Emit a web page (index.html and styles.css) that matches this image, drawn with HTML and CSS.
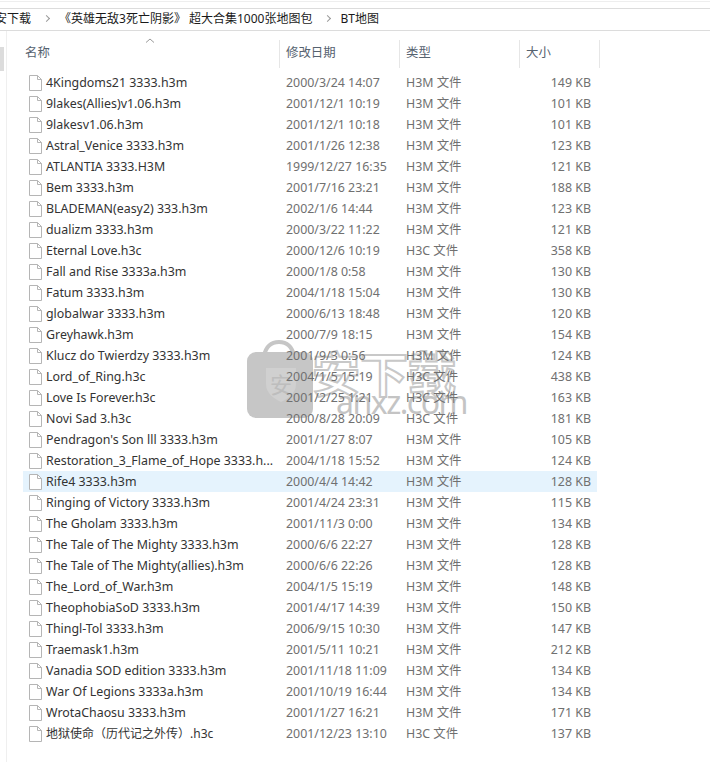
FILE: index.html
```html
<!DOCTYPE html>
<html lang="en">
<head>
  <meta charset="UTF-8">
  <title>BT地图</title>
  <link rel="stylesheet" href="styles.css">
</head>
<body>
  <div class="topline"></div>
  <div class="breadcrumb">
    <span class="first">安下载</span><i class="sep"></i>
    <span>《英雄无敌3死亡阴影》 超大合集1000张地图包</span><i class="sep"></i>
    <span>BT地图</span>
  </div>
  <div class="pane">
    <div class="sidebar"><div class="thumb"></div></div>
    <div class="main">
      <div class="head">
        <div class="col name">名称<svg class="caret" width="10" height="5" viewBox="0 0 10 5"><path d="M1 4.5 5 1l4 3.5" fill="none" stroke="#9a9a9a"/></svg></div>
        <div class="col date">修改日期</div>
        <div class="col type">类型</div>
        <div class="col size">大小</div>
      </div>
      <div id="rows"></div>
    </div>
  </div>
  <div class="mark">
    <svg width="66" height="79" viewBox="0 0 66 79">
      <path d="M17 16C19 6 25 2 32 2s13 4 15 14" fill="none" stroke="#c6c6c6" stroke-width="4"/>
      <rect x="0" y="12" width="66" height="66" rx="9" fill="#c6c6c6"/>
      <path d="M19 28h30v16c0 9-7 14-15 18-8-4-15-9-15-18z" fill="#d0d0d0"/>
      <text x="34" y="53" text-anchor="middle" class="mark-glyph">安</text>
    </svg>
    <div class="mark-text">
      <div class="mark-cn">安下载</div>
      <div class="mark-en">anxz.com</div>
    </div>
  </div>
  <script src="rows.js"></script>
</body>
</html>
```

FILE: styles.css
```css
body {
  margin: 0;
  width: 710px;
  height: 762px;
  overflow: hidden;
  background: #fff;
  position: relative;
  font-family: "Noto Sans", "Noto Sans CJK SC", sans-serif;
  font-size: 12.4px;
}
.topline {
  height: 1px;
  margin: 1px 0 6px;
  background: #eeeeee;
}
.breadcrumb {
  height: 23px;
  box-sizing: border-box;
  padding-bottom: 3px;
  border-top: 1px solid #dcdcdc;
  border-bottom: 1px solid #dcdcdc;
  display: flex;
  align-items: center;
  color: #1a1a1a;
  font-size: 12px;
  white-space: nowrap;
}
.first {
  margin-left: -5px;
}
.sep {
  width: 4px;
  height: 4px;
  margin: 0 10px 0 13px;
  border-top: 1px solid #999;
  border-right: 1px solid #999;
  transform: rotate(45deg);
}
.pane {
  display: flex;
  position: relative;
  z-index: 1;
}
.sidebar {
  width: 6px;
  border-right: 1px solid #efefef;
  height: 731px;
}
.thumb {
  width: 4px;
  height: 24px;
  margin-top: 16px;
  background: #dcdcdc;
}
.main {
  margin-left: 15px;
}
.head {
  display: flex;
  height: 41px;
  color: #56626f;
}
.col {
  height: 28px;
  margin-top: 9px;
  line-height: 25px;
  padding-left: 3px;
  border-right: 1px solid #e6e6e6;
  box-sizing: border-box;
  position: relative;
}
.name { width: 258px; }
.date { width: 120px; padding-left: 6px; }
.type { width: 120px; padding-left: 6px; }
.size { width: 80px; padding-left: 6px; }
.caret {
  position: absolute;
  left: 123px;
  top: -2px;
}
.row {
  display: flex;
  height: 21px;
  line-height: 21px;
  width: 574px;
  margin-left: 1px;
  color: #707070;
  white-space: nowrap;
}
.row.sel {
  background: #e5f3fd;
}
.cell-name {
  width: 263px;
  display: flex;
  align-items: center;
  color: #333333;
  padding-left: 6px;
  box-sizing: border-box;
}
.cell-name svg {
  flex: none;
  margin-right: 4px;
}
.cell-name.cjk {
  font-size: 12px;
}
.cell-date { width: 120px; }
.cell-type { width: 114px; }
.cell-size {
  width: 71px;
  text-align: right;
}
.mark {
  position: absolute;
  left: 247px;
  top: 340px;
  display: flex;
}
.mark-glyph {
  font-size: 22px;
  fill: #bdbdbd;
}
.mark-text {
  margin-left: -1px;
  line-height: 1;
}
.mark-cn {
  font-size: 48px;
  font-weight: 700;
  margin-top: 10px;
  color: #fff;
  -webkit-text-stroke: 2px #c8c8c8;
}
.mark-en {
  font-size: 32px;
  letter-spacing: -1.5px;
  margin-top: -12px;
  margin-left: 24px;
  color: #c4c4c4;
}
```

FILE: rows.js
```js
const files = [
  ['4Kingdoms21 3333.h3m', '2000/3/24 14:07', 'H3M 文件', '149 KB'],
  ['9lakes(Allies)v1.06.h3m', '2001/12/1 10:19', 'H3M 文件', '101 KB'],
  ['9lakesv1.06.h3m', '2001/12/1 10:18', 'H3M 文件', '101 KB'],
  ['Astral_Venice 3333.h3m', '2001/1/26 12:38', 'H3M 文件', '123 KB'],
  ['ATLANTIA 3333.H3M', '1999/12/27 16:35', 'H3M 文件', '121 KB'],
  ['Bem 3333.h3m', '2001/7/16 23:21', 'H3M 文件', '188 KB'],
  ['BLADEMAN(easy2) 333.h3m', '2002/1/6 14:44', 'H3M 文件', '123 KB'],
  ['dualizm 3333.h3m', '2000/3/22 11:22', 'H3M 文件', '121 KB'],
  ['Eternal Love.h3c', '2000/12/6 10:19', 'H3C 文件', '358 KB'],
  ['Fall and Rise 3333a.h3m', '2000/1/8 0:58', 'H3M 文件', '130 KB'],
  ['Fatum 3333.h3m', '2004/1/18 15:04', 'H3M 文件', '130 KB'],
  ['globalwar 3333.h3m', '2000/6/13 18:48', 'H3M 文件', '120 KB'],
  ['Greyhawk.h3m', '2000/7/9 18:15', 'H3M 文件', '154 KB'],
  ['Klucz do Twierdzy 3333.h3m', '2001/9/3 0:56', 'H3M 文件', '124 KB'],
  ['Lord_of_Ring.h3c', '2004/1/5 15:19', 'H3C 文件', '438 KB'],
  ['Love Is Forever.h3c', '2001/2/25 1:21', 'H3C 文件', '163 KB'],
  ['Novi Sad 3.h3c', '2000/8/28 20:09', 'H3C 文件', '181 KB'],
  ["Pendragon's Son lll 3333.h3m", '2001/1/27 8:07', 'H3M 文件', '105 KB'],
  ['Restoration_3_Flame_of_Hope 3333.h...', '2004/1/18 15:52', 'H3M 文件', '124 KB'],
  ['Rife4 3333.h3m', '2000/4/4 14:42', 'H3M 文件', '128 KB'],
  ['Ringing of Victory 3333.h3m', '2001/4/24 23:31', 'H3M 文件', '115 KB'],
  ['The Gholam 3333.h3m', '2001/11/3 0:00', 'H3M 文件', '134 KB'],
  ['The Tale of The Mighty 3333.h3m', '2000/6/6 22:27', 'H3M 文件', '128 KB'],
  ['The Tale of The Mighty(allies).h3m', '2000/6/6 22:26', 'H3M 文件', '128 KB'],
  ['The_Lord_of_War.h3m', '2004/1/5 15:19', 'H3M 文件', '148 KB'],
  ['TheophobiaSoD 3333.h3m', '2001/4/17 14:39', 'H3M 文件', '150 KB'],
  ['Thingl-Tol 3333.h3m', '2006/9/15 10:30', 'H3M 文件', '147 KB'],
  ['Traemask1.h3m', '2001/5/11 10:21', 'H3M 文件', '212 KB'],
  ['Vanadia SOD edition 3333.h3m', '2001/11/18 11:09', 'H3M 文件', '134 KB'],
  ['War Of Legions 3333a.h3m', '2001/10/19 16:44', 'H3M 文件', '134 KB'],
  ['WrotaChaosu 3333.h3m', '2001/1/27 16:21', 'H3M 文件', '171 KB'],
  ['地狱使命（历代记之外传）.h3c', '2001/12/23 13:10', 'H3C 文件', '137 KB']
];

const icon = '<svg width="13" height="16" viewBox="0 0 13 16"><path d="M.5.5h8l4 4v11H.5z" fill="#fff" stroke="#b5b5b5"/><path d="M8.5.5v4h4" fill="none" stroke="#b5b5b5"/></svg>';
const rows = document.getElementById('rows');

files.forEach(function(f, i) {
  const row = document.createElement('div');
  row.className = i === 19 ? 'row sel' : 'row';
  const nameClass = /[^\x00-\x7f]/.test(f[0]) ? 'cell-name cjk' : 'cell-name';
  row.innerHTML = '<div class="' + nameClass + '">' + icon + '<span>' + f[0] + '</span></div>' +
    '<div class="cell-date">' + f[1] + '</div>' +
    '<div class="cell-type">' + f[2] + '</div>' +
    '<div class="cell-size">' + f[3] + '</div>';
  rows.appendChild(row);
});
```
